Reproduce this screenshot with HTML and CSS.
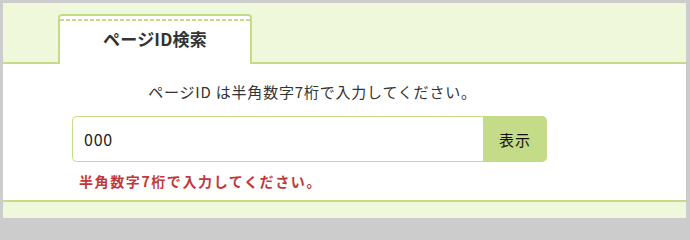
FILE: index.html
```html
<!DOCTYPE html>
<html lang="ja">
<head>
<meta charset="utf-8">
<title>ページID検索</title>
<link rel="stylesheet" href="styles.css">
</head>
<body>
<div class="frame">
  <div class="tabbar">
    <div class="tab">
      <div class="tab-inner">ページID検索</div>
    </div>
  </div>
  <div class="panel">
    <form class="search">
      <p class="hint">ページID は半角数字7桁で入力してください。</p>
      <div class="field">
        <input class="input" type="text" value="000">
        <button class="btn" type="button">表示</button>
      </div>
      <p class="error">半角数字7桁で入力してください。</p>
    </form>
  </div>
  <div class="footer"></div>
</div>
</body>
</html>
```

FILE: styles.css
```css
html, body {
  margin: 0;
}
body {
  background: #cccccc;
  padding: 3px 4px 2px 3px;
  font-family: "Noto Sans CJK JP", "Noto Sans", sans-serif;
  color: #333;
}
.frame {
  display: flex;
  flex-direction: column;
  background: #f0f8dc;
}
.tabbar {
  background: #f0f8dc;
  border-bottom: 2px solid #c4dc88;
  padding: 11px 0 0 55px;
  display: flex;
  height: 48px;
}
.tab {
  width: 190px;
  background: #fff;
  border: 2px solid #c4dc88;
  border-bottom: none;
  border-radius: 4px 4px 0 0;
  margin-bottom: -2px;
  padding-top: 3px;
}
.tab-inner {
  background-image: repeating-linear-gradient(to right, #c4dc88 0 4px, transparent 4px 6px);
  background-size: 100% 2px;
  background-repeat: no-repeat;
  padding-top: 2px;
  height: 41px;
  box-sizing: border-box;
  line-height: 36px;
  text-align: center;
  font-weight: bold;
  font-size: 17px;
  letter-spacing: 0.2px;
  color: #333;
}
.panel {
  background: #fff;
  padding: 16px 0 9px 69px;
}
.search {
  width: 475px;
  margin: 0;
}
.hint {
  margin: 0;
  padding-left: 6px;
  text-align: center;
  font-size: 15px;
  line-height: 24px;
  letter-spacing: 0.8px;
  color: #333;
}
.field {
  display: flex;
  margin-top: 12px;
  height: 46px;
}
.input {
  flex: 1;
  min-width: 0;
  border: 1px solid #c4dc88;
  border-right: none;
  border-radius: 5px 0 0 5px;
  padding: 0 11px;
  font-family: "Noto Sans CJK JP", "Noto Sans", sans-serif;
  font-size: 16px;
  letter-spacing: 0.8px;
  color: #222;
  outline: none;
  background: #fff;
}
.btn {
  width: 64px;
  border: none;
  background: #c4dc88;
  border-radius: 0 5px 5px 0;
  font-family: "Noto Sans CJK JP", "Noto Sans", sans-serif;
  font-size: 15px;
  letter-spacing: 1px;
  color: #111;
  padding: 0;
}
.error {
  margin: 9px 0 0 7px;
  font-size: 14px;
  line-height: 20px;
  font-weight: bold;
  letter-spacing: 1.6px;
  color: #c2383a;
}
.footer {
  height: 16px;
  border-top: 2px solid #c4dc88;
  background: #f0f8dc;
}
```
